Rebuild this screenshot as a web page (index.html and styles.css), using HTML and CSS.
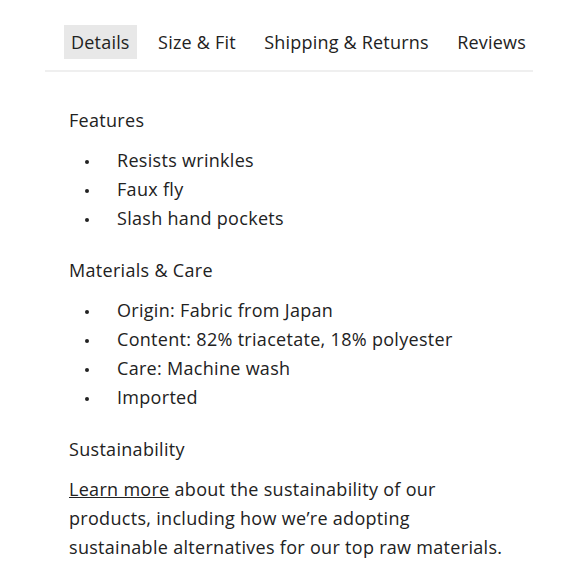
FILE: index.html
```html
<!DOCTYPE html>
<html lang="en">
<head>
  <meta charset="UTF-8">
  <meta name="viewport" content="width=device-width, initial-scale=1.0">
  <title>Product details</title>
  <link rel="stylesheet" href="styles.css">
</head>
<body>
  <nav class="tabs">
    <a class="tab active" href="#">Details</a>
    <a class="tab" href="#">Size &amp; Fit</a>
    <a class="tab" href="#">Shipping &amp; Returns</a>
    <a class="tab" href="#">Reviews</a>
  </nav>

  <div class="panel">
    <h3>Features</h3>
    <ul>
      <li>Resists wrinkles</li>
      <li>Faux fly</li>
      <li>Slash hand pockets</li>
    </ul>

    <h3>Materials &amp; Care</h3>
    <ul>
      <li>Origin: Fabric from Japan</li>
      <li>Content: 82% triacetate, 18% polyester</li>
      <li>Care: Machine wash</li>
      <li>Imported</li>
    </ul>

    <h3>Sustainability</h3>
    <p><a href="#">Learn more</a> about the sustainability of our products, including how we’re adopting sustainable alternatives for our top raw materials.</p>
  </div>
</body>
</html>
```

FILE: styles.css
```css
body {
  font-family: "Open Sans", "Liberation Sans", sans-serif;
  color: #222;
  background-color: #fff;
  margin: 0;
  padding-top: 25px;
}
.tabs {
  display: flex;
  justify-content: space-between;
  margin-left: 45px;
  width: 488px;
  padding-left: 19px;
  box-sizing: border-box;
  border-bottom: 2px solid #efefef;
  padding-bottom: 11px;
}
.tab {
  color: #222;
  text-decoration: none;
  font-size: 18px;
  line-height: 34px;
  padding: 0 7px;
  letter-spacing: 0.2px;
}
.tab.active {
  background-color: #e8e8e8;
}
.panel {
  padding: 34px 0 0 69px;
  font-size: 18px;
  letter-spacing: 0.3px;
}
h3 {
  font-size: 18px;
  font-weight: normal;
  line-height: 29px;
  margin: 0 0 11px;
}
ul {
  list-style: none;
  margin: 0 0 23px;
  padding-left: 16px;
  line-height: 29px;
}
li {
  display: flex;
  align-items: center;
}
li::before {
  content: "";
  width: 4px;
  height: 4px;
  border-radius: 50%;
  background-color: #222;
  margin: 2px 28px 0 0;
}
p {
  margin: 0;
  line-height: 29px;
  width: 435px;
}
p a {
  color: #222;
}
```
